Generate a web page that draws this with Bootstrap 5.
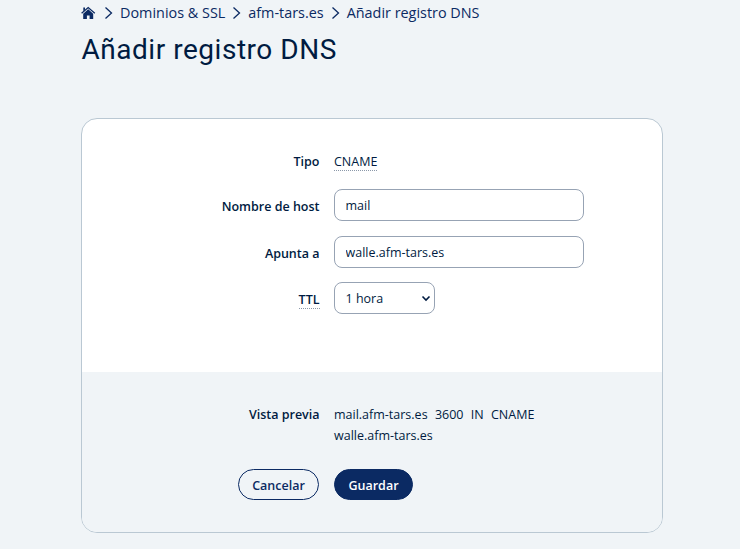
<!DOCTYPE html>
<html lang="es">
<head>
<meta charset="utf-8">
<meta name="viewport" content="width=device-width, initial-scale=1">
<title>Añadir registro DNS</title>
<link href="https://cdn.jsdelivr.net/npm/bootstrap@5.3.0/dist/css/bootstrap.min.css" rel="stylesheet">
<style>
  body { background: #f0f4f7; color: #001b41; font-family: "Open Sans", "Noto Sans", sans-serif; font-size: 12.5px; line-height: 21px; overflow: hidden; }
  .page { width: 582px; margin-left: 81px; }
  .crumbs { height: 26px; font-size: 14.4px; line-height: 26px; color: #0b2a63; }
  .crumbs a { color: inherit; }
  .crumbs svg { flex: none; }
  .title { font-family: Roboto, sans-serif; font-size: 28px; font-weight: 400; line-height: 36px; letter-spacing: .53px; margin: 6px 0 50px .5px; white-space: nowrap; }
  .panel { --bs-card-border-color: #bac8d3; --bs-card-border-radius: 16px; --bs-card-inner-border-radius: 15px; height: 415px; color: inherit; }
  .panel .card-body { padding: 32px 0 0; }
  .panel .card-footer { height: 160px; padding: 32px 0 0; background: #f0f4f7; }
  .line-label { width: 237.5px; margin-right: 14.5px; flex: none; text-align: right; font-weight: 600; color: #001b41; }
  label.line-label { padding-top: 2px; }
  .type-line { margin-bottom: 17px; }
  .host-line { margin-bottom: 15px; }
  .target-line { margin-bottom: 14px; }
  .action-line { margin-top: 23px; }
  .record { word-spacing: .4px; }
  .hint { border-bottom: 1px dotted #8b98a9; display: inline-block; line-height: 17px; }
  .field { height: 32px; width: 250px; padding: 0 10.5px; border: 1px solid #97a3b4; border-radius: 8px; font-size: 12.5px; line-height: 30px; color: #001b41; background-color: #fff; }
  .form-select.field { width: 101px; padding-top: 1px; background-image: none; }
  .chevron { right: 4px; top: 12px; pointer-events: none; }
  .pill { --bs-btn-font-size: 12.5px; --bs-btn-font-weight: 600; --bs-btn-padding-x: 13px; --bs-btn-padding-y: 0; height: 31px; line-height: 31px; }
  .pill-line { --bs-btn-color: #0b2a63; --bs-btn-border-color: #0b2a63; width: 81px; margin-right: .5px; }
  .pill-fill { --bs-btn-color: #fff; --bs-btn-bg: #0b2a63; --bs-btn-border-color: #0b2a63; width: 79px; }
</style>
</head>
<body>
<main class="page">
  <nav class="crumbs d-flex align-items-center text-nowrap" aria-label="Ruta">
    <a href="#" class="d-flex" aria-label="Inicio"><svg width="15" height="14" viewBox="0 0 15 14"><path d="M.6 7.300 7.200 1.500l6.600 5.800" fill="none" stroke="#0b2a63" stroke-width="1.300"/><path d="M2.300 1.500h1.700v2.200L2.300 5.200z" fill="#0b2a63"/><path d="M2.200 7.700 7.200 3.300l5 4.400V13H8.600V9.400H5.900V13H2.200z" fill="#0b2a63"/></svg></a>
    <svg width="24" height="14" viewBox="0 0 24 14"><path d="M9.500 1.500 15.500 7l-6 5.500" fill="none" stroke="#0b2a63" stroke-width="1.300"/></svg>
    <a href="#" class="text-decoration-none">Dominios &amp; SSL</a>
    <svg width="23" height="14" viewBox="0 0 23 14"><path d="M8.500 1.500 14.500 7l-6 5.500" fill="none" stroke="#0b2a63" stroke-width="1.300"/></svg>
    <a href="#" class="text-decoration-none">afm-tars.es</a>
    <svg width="23" height="14" viewBox="0 0 23 14"><path d="M8.500 1.500 14.500 7l-6 5.500" fill="none" stroke="#0b2a63" stroke-width="1.300"/></svg>
    <span>Añadir registro DNS</span>
  </nav>
  <h1 class="title">Añadir registro DNS</h1>
  <form class="card panel">
    <div class="card-body">
      <div class="d-flex type-line"><div class="line-label">Tipo</div><div><span class="hint">CNAME</span></div></div>
      <div class="d-flex align-items-center host-line"><label class="line-label" for="host">Nombre de host</label><input id="host" class="form-control field" value="mail"></div>
      <div class="d-flex align-items-center target-line"><label class="line-label" for="target">Apunta a</label><input id="target" class="form-control field" value="walle.afm-tars.es"></div>
      <div class="d-flex align-items-center"><label class="line-label" for="ttl"><span class="hint">TTL</span></label>
        <div class="position-relative"><select id="ttl" class="form-select field"><option>1 hora</option></select><svg class="chevron position-absolute" width="10" height="8" viewBox="0 0 10 8"><path d="m1.500 2.500 3.500 3.500L8.500 2.500" fill="none" stroke="#001b41" stroke-width="1.600"/></svg></div></div>
    </div>
    <div class="card-footer border-0">
      <div class="d-flex"><div class="line-label">Vista previa</div><div class="record">mail.afm-tars.es&nbsp; 3600&nbsp; IN&nbsp; CNAME<br>walle.afm-tars.es</div></div>
      <div class="d-flex action-line"><div class="line-label"><button type="button" class="btn rounded-pill pill pill-line">Cancelar</button></div><button type="button" class="btn rounded-pill pill pill-fill">Guardar</button></div>
    </div>
  </form>
</main>
<script src="https://cdn.jsdelivr.net/npm/bootstrap@5.3.0/dist/js/bootstrap.bundle.min.js"></script>
</body>
</html>
